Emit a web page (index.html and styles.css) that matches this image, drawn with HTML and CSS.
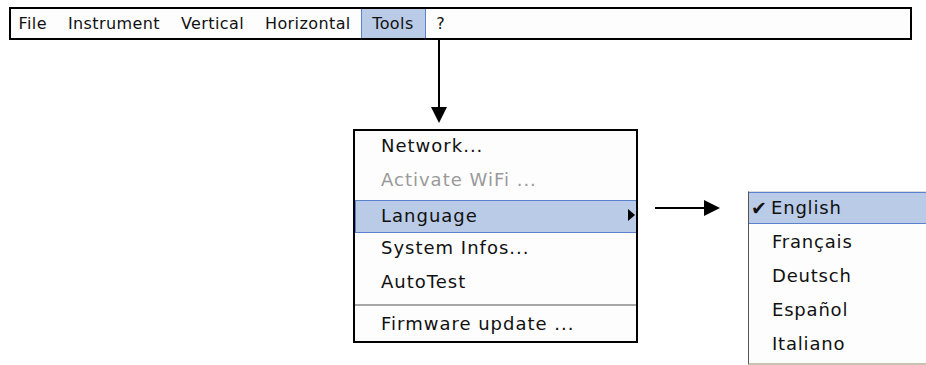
FILE: index.html
```html
<!DOCTYPE html>
<html lang="en">
<head>
    <meta charset="UTF-8">
    <title>Tools menu</title>
    <link rel="stylesheet" href="styles.css">
</head>
<body>

<div class="menubar">
    <span class="bar-item">File</span>
    <span class="bar-item">Instrument</span>
    <span class="bar-item">Vertical</span>
    <span class="bar-item">Horizontal</span>
    <span class="bar-item active">Tools</span>
    <span class="bar-item">?</span>
</div>

<svg class="down-arrow" width="18" height="89" viewBox="0 0 18 89">
    <line x1="9" y1="0" x2="9" y2="68" stroke="#000" stroke-width="2"/>
    <polygon points="1,67 17,67 9,83" fill="#000"/>
</svg>

<div class="stage">
    <div class="menu">
        <div class="item">Network...</div>
        <div class="item disabled">Activate WiFi ...</div>
        <div class="item selected">Language <span class="caret"></span></div>
        <div class="item">System Infos...</div>
        <div class="item">AutoTest</div>
        <div class="separator"></div>
        <div class="item">Firmware update ...</div>
    </div>

    <svg class="side-arrow" width="110" height="160" viewBox="0 0 110 160">
        <line x1="17" y1="79" x2="68" y2="79" stroke="#000" stroke-width="2"/>
        <polygon points="66,71 82,79 66,87" fill="#000"/>
    </svg>

    <div class="submenu">
        <div class="sub-item selected"><span class="check">&#10004;</span>English</div>
        <div class="sub-item">Français</div>
        <div class="sub-item">Deutsch</div>
        <div class="sub-item">Español</div>
        <div class="sub-item">Italiano</div>
    </div>
</div>

</body>
</html>
```

FILE: styles.css
```css
body {
    margin: 0;
    background-color: white;
    font-family: "DejaVu Sans", Verdana, sans-serif;
    font-size: 18px;
    color: #111;
    overflow: hidden;
}

.menubar {
    display: flex;
    margin: 7px 0 0 9px;
    width: 899px;
    height: 29px;
    border: 2px solid black;
    background-color: #fdfdfd;
    font-size: 16px;
    letter-spacing: 0.4px;
}

.bar-item {
    display: flex;
    align-items: center;
    padding: 0 10.5px;
}

.bar-item:first-child {
    padding-left: 7.5px;
}

.bar-item.active {
    background-color: #b9cbe6;
    border-left: 1px solid #5b82cf;
    border-right: 1px solid #5b82cf;
    padding: 0 11px 0 10px;
}

.down-arrow {
    display: block;
    margin-left: 430px;
}

.stage {
    display: flex;
    align-items: flex-start;
    margin-left: 353px;
}

.menu {
    width: 281px;
    border: 2px solid black;
    background-color: #fdfdfd;
    letter-spacing: 1px;
}

.item {
    display: flex;
    align-items: center;
    justify-content: space-between;
    height: 29px;
    padding: 0 1px 5px 26px;
}

.item:last-child {
    height: 27px;
    padding-bottom: 4px;
}

.item.disabled {
    color: #9a9a9a;
}

.item.selected {
    height: 28px;
    margin: 1px 0 0;
    background-color: #b9cbe6;
    border: 1px solid #5b82cf;
    border-right: none;
    padding: 0 1px 3px 25px;
}

.caret {
    width: 0;
    height: 0;
    border-top: 6px solid transparent;
    border-bottom: 6px solid transparent;
    border-left: 7px solid black;
}

.separator {
    height: 0;
    margin: 3px 0;
    border-top: 2px solid #a7a7a7;
    border-bottom: 1px solid white;
}

.side-arrow {
    display: block;
}

.submenu {
    flex: 1;
    margin-top: 62px;
    height: 171px;
    border-left: 1px solid #555;
    border-top: 1px solid #ddd;
    border-bottom: 2px solid #c9c2ae;
    background-color: #fdfdfd;
    letter-spacing: 0.8px;
}

.sub-item {
    display: flex;
    align-items: center;
    height: 31px;
    padding: 0 0 3px 23px;
}

.sub-item.selected {
    height: 29px;
    margin-bottom: 2px;
    padding: 0 0 1px 3px;
    background-color: #b9cbe6;
    border-top: 1px solid #5b82cf;
    border-bottom: 1px solid #5b82cf;
}

.check {
    width: 20px;
    margin-left: -1px;
    font-size: 19px;
    letter-spacing: 0;
}
```
